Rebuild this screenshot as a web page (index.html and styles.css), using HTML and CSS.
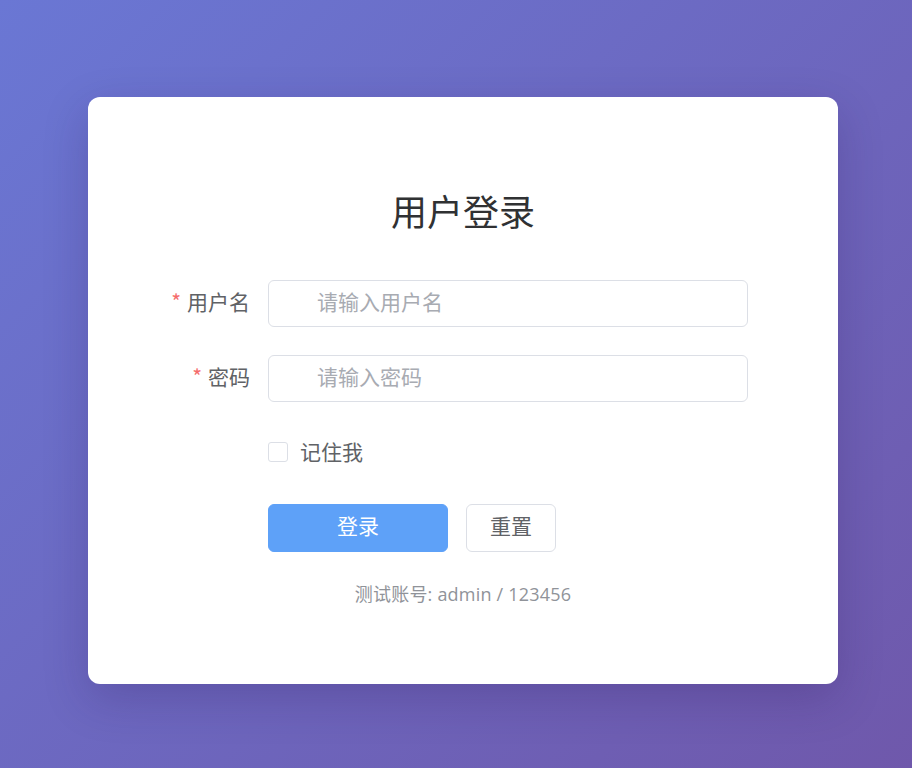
FILE: index.html
```html
<!DOCTYPE html>
<html lang="zh-CN">
<head>
<meta charset="utf-8">
<title>用户登录</title>
<link rel="stylesheet" href="styles.css">
</head>
<body>
<div class="page">
  <div class="card">
    <h2 class="title">用户登录</h2>
    <form class="form">
      <div class="row">
        <label class="label"><span class="req">*</span>用户名</label>
        <div class="field"><input class="input" type="text" placeholder="请输入用户名"></div>
      </div>
      <div class="row">
        <label class="label"><span class="req">*</span>密码</label>
        <div class="field"><input class="input" type="password" placeholder="请输入密码"></div>
      </div>
      <div class="row">
        <div class="label"></div>
        <div class="field">
          <label class="check"><span class="box"></span><span class="check-text">记住我</span></label>
        </div>
      </div>
      <div class="row">
        <div class="label"></div>
        <div class="field buttons">
          <button type="button" class="btn btn-primary">登录</button>
          <button type="button" class="btn btn-default">重置</button>
        </div>
      </div>
    </form>
    <p class="hint">测试账号: admin / 123456</p>
  </div>
</div>
</body>
</html>
```
FILE: styles.css
```css
* { box-sizing: border-box; }
html, body { margin: 0; padding: 0; }
body {
  font-family: "Noto Sans CJK SC", "Noto Sans", sans-serif;
  background: linear-gradient(135deg, #6a77d4 0%, #6f58ab 100%);
  min-height: 768px;
}
.page {
  padding: 97px 0 0 88px;
}
.card {
  width: 750px;
  height: 587px;
  background: #fff;
  border-radius: 12px;
  box-shadow: 0 15px 45px rgba(40, 20, 80, 0.22);
  padding: 86px 0 0 0;
}
.title {
  margin: 0;
  font-size: 36px;
  line-height: 54px;
  font-weight: 400;
  color: #303133;
  text-align: center;
}
.form {
  margin: 42px 0 0 80px;
  width: 580px;
}
.row {
  display: flex;
  height: 48px;
  align-items: center;
  margin-bottom: 27px;
}
.row:last-child { margin-bottom: 0; }
.label {
  width: 100px;
  flex: none;
  text-align: right;
  padding-right: 18px;
  padding-bottom: 4px;
  font-size: 21px;
  color: #606266;
  line-height: 44px;
}
.req {
  color: #f56c6c;
  margin-right: 6px;
}
.field {
  width: 480px;
  flex: none;
  display: flex;
  align-items: center;
}
.input {
  width: 480px;
  height: 47px;
  border: 1px solid #dcdfe6;
  border-radius: 6px;
  padding: 0 15px 4px 48px;
  font-family: inherit;
  font-size: 21px;
  color: #606266;
  outline: none;
  background: #fff;
}
.input::placeholder { color: #a8abb2; }
.check {
  display: flex;
  align-items: center;
  cursor: pointer;
  margin-top: -3px;
}
.box {
  width: 20px;
  height: 20px;
  border: 1px solid #dcdfe6;
  border-radius: 3px;
  background: #fff;
}
.check-text {
  margin-left: 12px;
  font-size: 21px;
  color: #606266;
  padding-bottom: 2px;
}
.buttons { gap: 18px; }
.btn {
  height: 48px;
  border-radius: 6px;
  font-family: inherit;
  font-size: 21px;
  cursor: pointer;
  padding-top: 0;
  padding-bottom: 6px;
}
.btn-primary {
  width: 180px;
  background: #5ea1f8;
  border: 1px solid #5ea1f8;
  color: #fff;
}
.btn-default {
  background: #fff;
  border: 1px solid #dcdfe6;
  color: #606266;
  padding-left: 23px;
  padding-right: 23px;
}
.hint {
  margin: 29px 0 0;
  text-align: center;
  font-family: "Open Sans", "Noto Sans CJK SC", sans-serif;
  font-size: 18px;
  line-height: 27px;
  letter-spacing: 0.2px;
  color: #909399;
}
```
